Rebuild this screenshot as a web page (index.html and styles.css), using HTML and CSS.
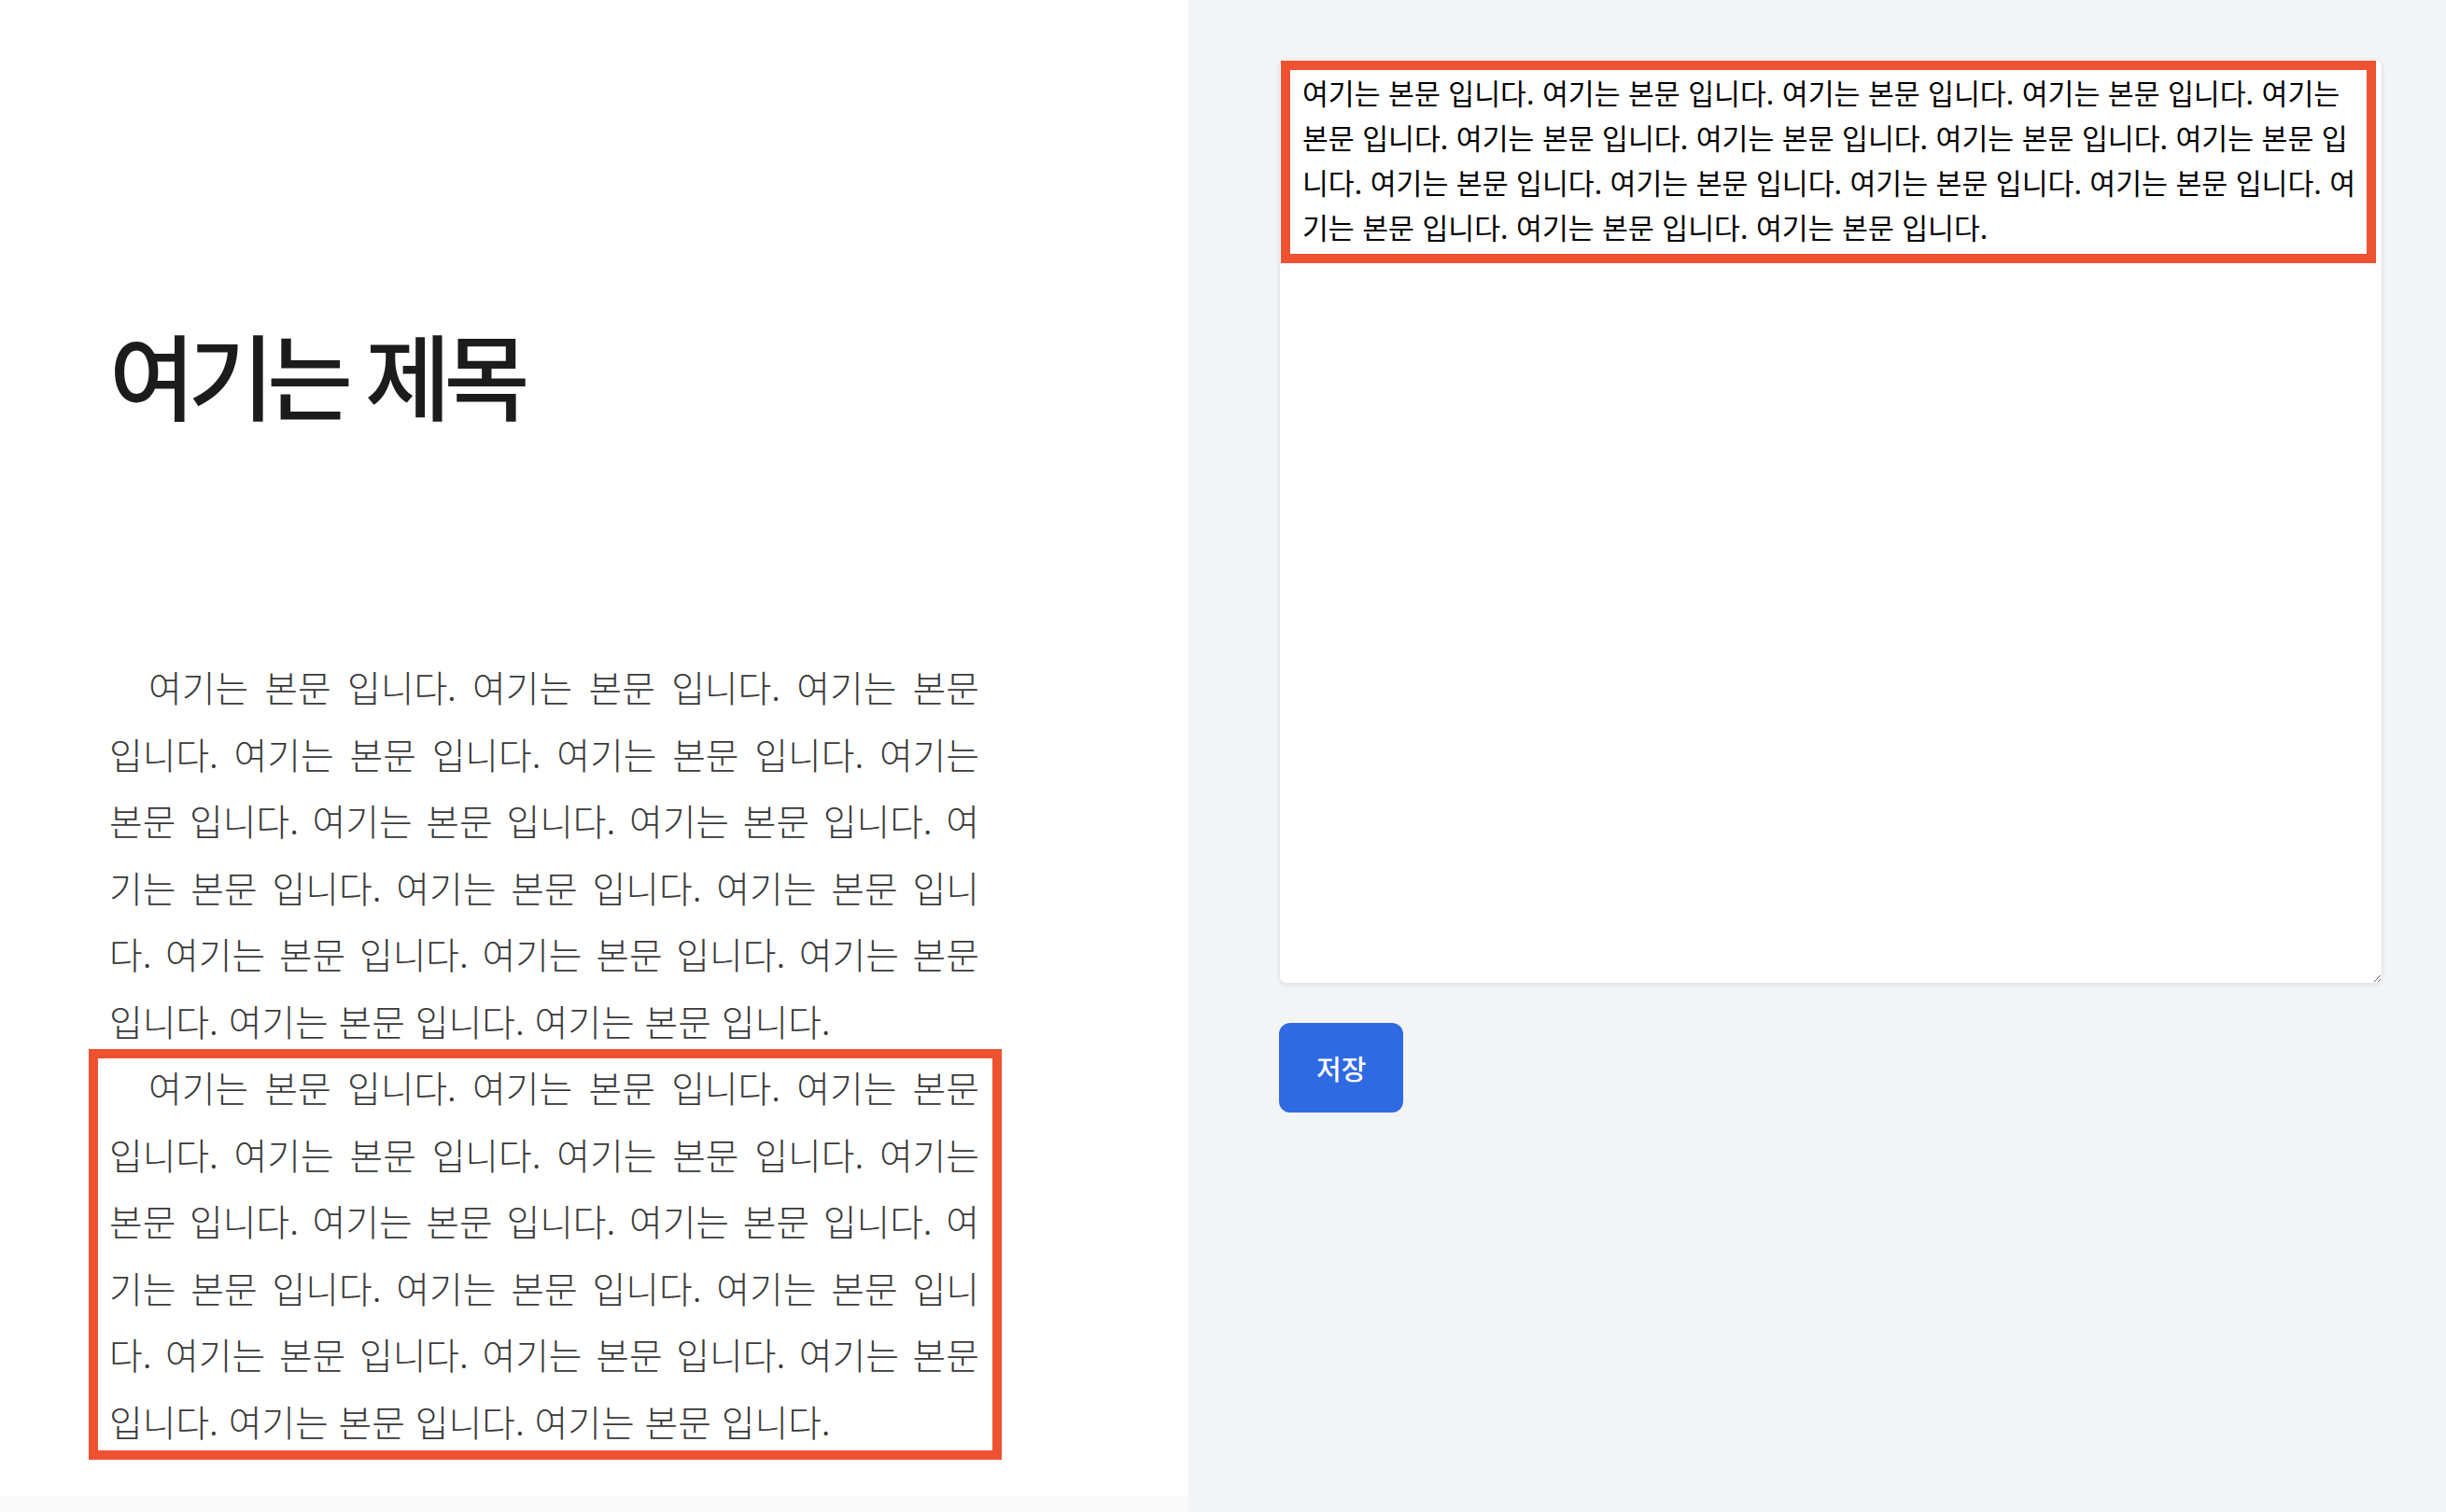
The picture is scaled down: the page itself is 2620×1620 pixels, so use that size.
FILE: index.html
```html
<!DOCTYPE html>
<html lang="ko">
<head>
<meta charset="utf-8">
<title>본문 편집</title>
<link rel="stylesheet" href="styles.css">
</head>
<body>
<div class="page">
  <section class="doc">
    <div class="sheet">
      <h1 class="title">여기는 제목</h1>
      <p class="para">여기는 본문 입니다. 여기는 본문 입니다. 여기는 본문 입니다. 여기는 본문 입니다. 여기는 본문 입니다. 여기는 본문 입니다. 여기는 본문 입니다. 여기는 본문 입니다. 여기는 본문 입니다. 여기는 본문 입니다. 여기는 본문 입니다. 여기는 본문 입니다. 여기는 본문 입니다. 여기는 본문 입니다. 여기는 본문 입니다. 여기는 본문 입니다.</p>
      <div class="marked">
        <p class="para">여기는 본문 입니다. 여기는 본문 입니다. 여기는 본문 입니다. 여기는 본문 입니다. 여기는 본문 입니다. 여기는 본문 입니다. 여기는 본문 입니다. 여기는 본문 입니다. 여기는 본문 입니다. 여기는 본문 입니다. 여기는 본문 입니다. 여기는 본문 입니다. 여기는 본문 입니다. 여기는 본문 입니다. 여기는 본문 입니다. 여기는 본문 입니다.</p>
      </div>
    </div>
  </section>
  <section class="editor">
    <div class="field">
      <textarea class="body-input">여기는 본문 입니다. 여기는 본문 입니다. 여기는 본문 입니다. 여기는 본문 입니다. 여기는 본문 입니다. 여기는 본문 입니다. 여기는 본문 입니다. 여기는 본문 입니다. 여기는 본문 입니다. 여기는 본문 입니다. 여기는 본문 입니다. 여기는 본문 입니다. 여기는 본문 입니다. 여기는 본문 입니다. 여기는 본문 입니다. 여기는 본문 입니다.</textarea>
      <div class="highlight"></div>
    </div>
    <button class="save" type="button">저장</button>
  </section>
</div>
</body>
</html>
```

FILE: styles.css
```css
html, body {
  margin: 0;
  padding: 0;
}

body {
  font-family: "Noto Sans CJK KR", "Noto Sans", sans-serif;
  background: #f3f4f6;
}

.page {
  display: grid;
  grid-template-columns: 1273px 1fr;
  height: 1620px;
}

.doc {
  background: #fafafa;
}

.sheet {
  background: #ffffff;
  height: 1603px;
  box-sizing: border-box;
  padding: 342px 224px 0 117px;
}

.title {
  margin: 0 0 243px;
  font-size: 100px;
  line-height: 115px;
  font-weight: 500;
  letter-spacing: -7.5px;
  color: #1c1c1c;
}

.para {
  margin: 0;
  font-size: 38.8px;
  line-height: 71.5px;
  font-weight: 300;
  text-indent: 42px;
  text-align: justify;
  color: #3a3a3a;
}

.marked {
  position: relative;
}

.marked::after {
  content: "";
  position: absolute;
  top: -5px;
  right: -24px;
  bottom: -6px;
  left: -22px;
  border: 10px solid #ee5231;
  pointer-events: none;
}

.editor {
  display: flex;
  flex-direction: column;
  align-items: flex-start;
  gap: 42px;
  padding: 63px 68px 0 97px;
}

.field {
  position: relative;
  width: 1182px;
}

.body-input {
  display: block;
  width: 100%;
  height: 991px;
  box-sizing: border-box;
  margin: 0;
  border: 1px solid #e5e7eb;
  border-radius: 8px;
  padding: 11px 20px 11px 24px;
  background: #ffffff;
  color: #000000;
  font-family: "Noto Sans CJK KR", "Noto Sans", sans-serif;
  font-size: 30.3px;
  line-height: 48px;
  box-shadow: 0 2px 4px rgba(0, 0, 0, 0.08);
  outline: none;
}

.highlight {
  position: absolute;
  left: 2px;
  top: 2px;
  width: 1173px;
  height: 217px;
  box-sizing: border-box;
  border: 10px solid #ee5231;
  pointer-events: none;
}

.save {
  height: 96px;
  padding: 0 40px;
  border: 0;
  border-radius: 12px;
  background: #2f6ae3;
  color: #ffffff;
  font-family: "Noto Sans CJK KR", "Noto Sans", sans-serif;
  font-size: 29px;
  font-weight: 500;
  cursor: pointer;
}
```
